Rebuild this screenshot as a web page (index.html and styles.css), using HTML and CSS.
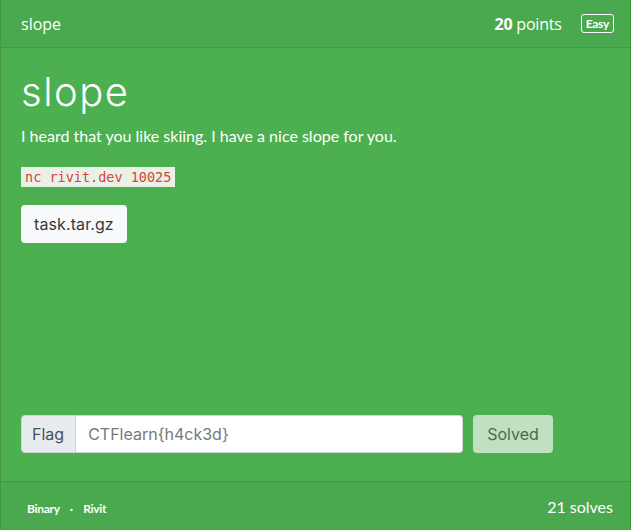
FILE: index.html
```html
<!DOCTYPE html>
<html>

<head>
    <meta name="viewport" content="width=device-width, initial-scale=1.0">
    <meta charset="utf-8">
    <title>slope</title>
    <link rel="stylesheet" href="styles.css">
</head>

<body>
    <div class="card">
        <div class="card__header">
            <span class="card__name">slope</span>
            <span class="card__meta">
                <span class="card__points"><b>20</b> points</span>
                <span class="badge badge--outline">Easy</span>
            </span>
        </div>
        <div class="card__body">
            <h1 class="card__title">slope</h1>
            <p class="card__text">I heard that you like skiing. I have a nice slope for you.</p>
            <p class="card__text"><code class="card__code">nc rivit.dev 10025</code></p>
            <a class="btn btn--light" href="#">task.tar.gz</a>

            <form class="flag">
                <div class="flag__group">
                    <span class="flag__label">Flag</span>
                    <input class="flag__input" type="text" placeholder="CTFlearn{h4ck3d}" disabled>
                </div>
                <button class="btn btn--solved" type="button" disabled>Solved</button>
            </form>
        </div>
        <div class="card__footer">
            <span class="card__tags">
                <span class="badge">Binary</span>
                <span class="card__dot">·</span>
                <span class="badge">Rivit</span>
            </span>
            <span class="card__solves">21 solves</span>
        </div>
    </div>
</body>

</html>
```

FILE: styles.css
```css
body {
    --green: #4caf50;
    --green-dark: #4aa94e;
    --border: #43983f;
    --radius: 4px;
    margin: 0;
    height: 100vh;
    font: 400 16px 'Lato', sans-serif;
    color: #ffffff;
    background: #ffffff;
}

.card {
    display: flex;
    flex-direction: column;
    box-sizing: border-box;
    height: 100vh;
    border-left: 1px solid var(--border);
    border-right: 1px solid var(--border);
    background: var(--green);
}

.card__header,
.card__footer {
    display: flex;
    align-items: center;
    justify-content: space-between;
    background: var(--green-dark);
    padding: 0 16px 0 20px;
}

.card__header {
    height: 47px;
    border-bottom: 1px solid var(--border);
}

.card__name {
    font: 400 16px 'Open Sans', sans-serif;
}

.card__meta {
    display: flex;
    align-items: center;
    gap: 19px;
}

.card__points {
    font: 400 16px 'Open Sans', sans-serif;
    letter-spacing: -0.2px;
}

.badge {
    font: 700 12px 'Lato', sans-serif;
    padding: 2px 5px;
    border-radius: 3px;
    letter-spacing: -0.3px;
}

.badge--outline {
    border: 1px solid #ffffff;
    padding: 1px 4px;
}

.card__body {
    flex: 1;
    display: flex;
    flex-direction: column;
    align-items: flex-start;
    padding: 20px 20px 28px;
}

.card__title {
    margin: 0 0 8px;
    font: 300 40px/48px 'Inter', sans-serif;
    letter-spacing: 1.5px;
}

.card__text {
    margin: 0 0 16px;
    line-height: 24px;
}

.card__code {
    display: inline-block;
    padding: 0 4px;
    font: 13.5px/20px 'DejaVu Sans Mono', monospace;
    color: #d9413f;
    background: #eaf2e8;
}

.btn {
    display: inline-block;
    box-sizing: border-box;
    height: 38px;
    padding: 0 12px;
    border: 1px solid transparent;
    border-radius: var(--radius);
    font: 400 16px/36px 'Inter', sans-serif;
    text-decoration: none;
}

.btn--light {
    margin-top: 1px;
    color: #343a40;
    background: #f8f9fa;
    letter-spacing: 0.1px;
}

.flag {
    display: flex;
    gap: 10px;
    width: 532px;
    margin-top: auto;
}

.flag__group {
    display: flex;
    flex: 1;
    height: 38px;
}

.flag__label {
    padding: 0 11px 0 10px;
    font: 400 16px/36px 'Inter', sans-serif;
    color: #495057;
    background: #e9ecef;
    border: 1px solid #ced4da;
    border-radius: var(--radius) 0 0 var(--radius);
}

.flag__input {
    flex: 1;
    min-width: 0;
    padding: 0 12px;
    border: 1px solid #ced4da;
    border-left: none;
    border-radius: 0 var(--radius) var(--radius) 0;
    font: 400 16px 'Inter', sans-serif;
    background: #ffffff;
    outline: none;
}

.flag__input::placeholder {
    color: #75797d;
}

.btn--solved {
    width: 80px;
    padding: 0;
    color: #4b6a4c;
    background: #bfe1c0;
}

.card__footer {
    height: 48px;
    border-top: 1px solid var(--border);
    padding-left: 21px;
}

.card__dot {
    font-size: 12px;
    font-weight: 700;
    margin: 0 1px;
}

.card__solves {
    font: 400 16px 'Lato', sans-serif;
    margin-right: 1px;
}
```
